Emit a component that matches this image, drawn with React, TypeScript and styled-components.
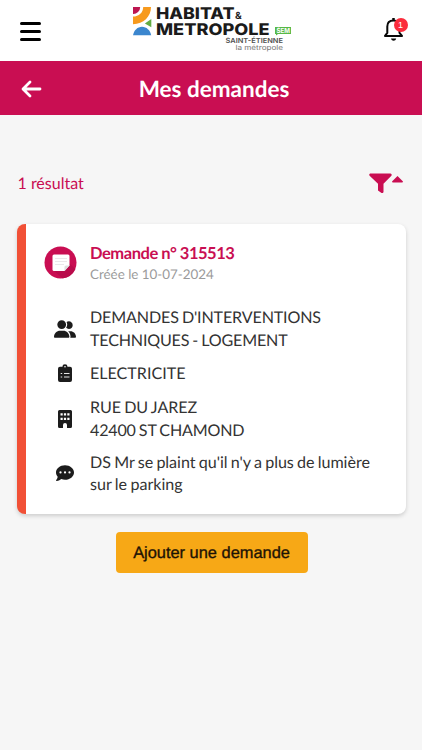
import React from "react";
import styled, { createGlobalStyle } from "styled-components";
import { FaCommentDots, FaUserGroup } from "react-icons/fa6";

const GlobalStyle = createGlobalStyle`
  * { box-sizing: border-box; }
  body {
    margin: 0;
    background: #f6f6f6;
    font-family: Lato, "Liberation Sans", sans-serif;
    color: #333;
    text-rendering: geometricPrecision;
  }
`;

const Page = styled.div`
  min-height: 750px;
  background: #f6f6f6;
`;

const TopBar = styled.header`
  height: 61px;
  display: grid;
  grid-template-columns: 132px 1fr 132px;
  background: #fff;
`;

const MenuButton = styled.button`
  width: 21px;
  height: 19px;
  margin: 21.5px 0 0 19.5px;
  padding: 0;
  border: 0;
  background: none;
  display: flex;
  flex-direction: column;
  justify-content: space-between;
`;

const MenuLine = styled.span`
  height: 3px;
  border-radius: 2px;
  background: #000;
`;

const BellButton = styled.button`
  position: relative;
  justify-self: end;
  width: 22px;
  height: 25px;
  margin: 17px 17px 0 0;
  padding: 0;
  border: 0;
  background: none;
  svg { display: block; }
`;

const Badge = styled.span`
  position: absolute;
  top: 0.5px;
  right: -2.5px;
  width: 14px;
  height: 14px;
  border-radius: 50%;
  background: #fb2c3c;
  color: #fff;
  font: 9px/14px "Liberation Sans", sans-serif;
  text-align: center;
`;

const TitleBar = styled.div`
  height: 54px;
  display: grid;
  grid-template-columns: 64px 1fr 58px;
  align-items: center;
  background: #c90e52;
  color: #fff;
`;

const BackButton = styled.button`
  margin: 2px 0 0 21px;
  padding: 0;
  border: 0;
  background: none;
  svg { display: block; }
`;

const Title = styled.h1`
  margin: 1px 0 0;
  font-size: 22.5px;
  line-height: 28px;
  font-weight: 700;
  text-align: center;
`;

const Content = styled.main`
  padding: 0 16px 0 17px;
`;

const ResultBar = styled.div`
  height: 109px;
  padding: 28px 3px 0 0.5px;
  display: flex;
  align-items: center;
  justify-content: space-between;
  color: #c90e52;
  font-size: 16px;
`;

const FilterButton = styled.button`
  margin: 0 0 1px;
  padding: 0;
  border: 0;
  background: none;
  svg { display: block; }
`;

const Card = styled.article`
  height: 290px;
  padding: 18px 20px 0 18px;
  border-left: 9px solid #f15036;
  border-radius: 8px;
  background: #fff;
  box-shadow: 0 2px 4px rgba(0, 0, 0, 0.17);
`;

const CardHeader = styled.div`
  display: grid;
  grid-template-columns: 46px 1fr;
  height: 64px;
`;

const CardTitle = styled.h2`
  margin: 0;
  color: #c90e52;
  font-size: 16.5px;
  line-height: 23px;
  font-weight: 700;
  letter-spacing: -0.45px;
  word-spacing: -0.2px;
`;

const CardDate = styled.div`
  color: #9a9a9a;
  font-size: 13.4px;
  line-height: 18px;
`;

const NoteIcon = styled.svg`
  margin-top: 4px;
`;

const Detail = styled.div<{ $gap?: number }>`
  display: grid;
  grid-template-columns: 46px 1fr;
  align-items: center;
  margin-bottom: ${({ $gap = 11 }) => $gap}px;
  font-size: 16.1px;
  line-height: 22.7px;
  word-spacing: -0.8px;
`;

const DetailIcon = styled.span`
  display: flex;
  justify-content: center;
  width: 41px;
  color: #1c1c1c;
`;

const DetailText = styled.div`
  padding-top: 1px;
  margin-bottom: -1px;
`;

const DetailLine = styled.div<{ $tracking: number }>`
  letter-spacing: ${({ $tracking }) => $tracking}px;
  white-space: nowrap;
`;

const AddButton = styled.button`
  display: block;
  width: 192px;
  height: 41px;
  margin: 18px auto 0;
  padding: 2px 0 0;
  border: 0;
  border-radius: 4px;
  background: #f7a816;
  color: #1d1305;
  font: 16.4px "Liberation Sans", Arial, sans-serif;
  -webkit-text-stroke: 0.35px #1d1305;
  text-rendering: geometricPrecision;
`;

const Logo = () => (
  <svg width="158" height="61" viewBox="132 0 158 61" overflow="visible" fontFamily="Inter, sans-serif">
    <path d="M133 7h7.2a7 7 0 0 1-7.2 7z" fill="#bd1650" />
    <path d="M143.2 7H151C151 16.5 143.5 24.2 133 24.2v-7.6C139 16.6 143.2 12.5 143.2 7z" fill="#f79a1d" />
    <path d="M151.3 19v8.2l-6.4-3.7z" fill="#62ac43" />
    <path d="M133 35.2c1-5 4.5-8.5 9-8.5s8.2 3.5 9.2 8.5z" fill="#3b86ce" />
    <g fill="#1b1b1b" fontWeight="800">
      <text x="156" y="18.9" fontSize="16" textLength="78.5" lengthAdjust="spacingAndGlyphs">HABITAT</text>
      <text x="235" y="19" fontSize="10" fontWeight="700">&amp;</text>
      <text x="156" y="35" fontSize="16" textLength="113.5" lengthAdjust="spacingAndGlyphs">METROPOLE</text>
    </g>
    <path d="M275 27h16v7h-13l-2 1.5v-1.5h-1z" fill="#57b947" />
    <text x="276.5" y="33.2" fontSize="7" fontWeight="700" fill="#fff" textLength="13.5" lengthAdjust="spacingAndGlyphs">SEM</text>
    <text x="225.5" y="43" fontSize="7" fontWeight="600" fill="#4e4e4e" textLength="57.5" lengthAdjust="spacingAndGlyphs">SAINT-ÉTIENNE</text>
    <text x="235.5" y="50" fontSize="7.2" fill="#777" textLength="47.5" lengthAdjust="spacingAndGlyphs">la métropole</text>
  </svg>
);

const ClipboardIcon = () => (
  <svg width="14" height="19" viewBox="0 0 14 19">
    <path d="M2 2.8h2.5a2.5 2.5 0 0 1 5 0H12q2 0 2 2V16q0 2-2 2H2q-2 0-2-2V4.8q0-2 2-2z" fill="currentColor" />
    <path d="M2.7 9.5h1.5M6 9.5h5.5M2.7 13h1.5M6 13h5.5" stroke="#fff" strokeWidth=".9" />
    <circle cx="7" cy="2.7" r=".8" fill="#fff" />
  </svg>
);

const BuildingIcon = () => (
  <svg width="14" height="18" viewBox="0 0 14 18">
    <path d="M1.5 0h11Q14 0 14 1.5v15q0 1.5-1.5 1.5H9v-3q0-2-2-2t-2 2v3H1.5Q0 18 0 16.5v-15Q0 0 1.5 0z" fill="currentColor" />
    <path d="M2.5 4.3h9M2.5 8.8h9" stroke="#fff" strokeWidth="2.2" strokeDasharray="2.2 1.2" />
  </svg>
);

const details = [
  {
    icon: <FaUserGroup size={22} />,
    lines: [
      { text: "DEMANDES D'INTERVENTIONS", tracking: -0.15 },
      { text: "TECHNIQUES - LOGEMENT", tracking: -0.19 },
    ],
  },
  { icon: <ClipboardIcon />, lines: [{ text: "ELECTRICITE", tracking: 0 }] },
  {
    icon: <BuildingIcon />,
    lines: [
      { text: "RUE DU JAREZ", tracking: -0.08 },
      { text: "42400 ST CHAMOND", tracking: -0.19 },
    ],
    gap: 9,
  },
  {
    icon: <FaCommentDots size={18} />,
    lines: [
      { text: "DS Mr se plaint qu'il n'y a plus de lumière", tracking: -0.04 },
      { text: "sur le parking", tracking: 0 },
    ],
  },
];

export default function App() {
  return (
    <Page>
      <GlobalStyle />
      <TopBar>
        <MenuButton aria-label="Menu">
          <MenuLine />
          <MenuLine />
          <MenuLine />
        </MenuButton>
        <Logo />
        <BellButton aria-label="Notifications">
          <svg width="22" height="25" viewBox="0 0 22 25" fill="none" stroke="#080808" strokeWidth="2">
            <path d="M2 18.9l2.3-3V9.5C4.3 5.5 7 3.5 10.5 3.5s6 2.5 6 6v6.4l2.5 3z" strokeLinejoin="round" />
            <path d="M10.5 1v3" strokeWidth="2.5" />
            <path d="M8 21.5h5.2c-.7 3-4.5 3-5.2 0z" fill="#080808" stroke="none" />
          </svg>
          <Badge>1</Badge>
        </BellButton>
      </TopBar>
      <TitleBar>
        <BackButton aria-label="Retour">
          <svg width="21" height="18" viewBox="0 0 21 18" fill="none" stroke="#fff" strokeWidth="2.8" strokeLinecap="round" strokeLinejoin="round">
            <path d="M9 2L2 9l7 7M2.5 9h16.5" />
          </svg>
        </BackButton>
        <Title>Mes demandes</Title>
      </TitleBar>
      <Content>
        <ResultBar>
          <span>1 résultat</span>
          <FilterButton aria-label="Filtrer">
            <svg width="34" height="20" viewBox="0 0 34 20" fill="#c90e52">
              <path d="M1.2 0.5h20.3q1.8.7.9 2.2L14.5 10.8v8.2q-.6 1.5-2 .9L9 17.5V10.8L.6 2.7Q-.4 1.2 1.2.5z" />
              <path d="M28.5 3L34 8.5q0 1-1 1h-9q-1 0-1-1z" />
            </svg>
          </FilterButton>
        </ResultBar>
        <Card>
          <CardHeader>
            <NoteIcon width="33" height="33" viewBox="0 0 33 33">
              <circle cx="16.5" cy="16.5" r="16" fill="#c90e52" />
              <path d="M25 17L31.5 23a16 16 0 0 1-13 9.3L10 25z" fill="#b90b4b" />
              <path d="M10 8.5h14q1.5 0 1.5 1.5v9.5L20.5 25H10Q8.5 25 8.5 23.5V10q0-1.5 1.5-1.5z" fill="#fff" />
              <path d="M25.5 19.5H22q-1.5 0-1.5 1.5v4z" fill="#ddd" />
              <path d="M11 12.5h12M11 15.5h12M11 18.5h9" stroke="#e5e1e3" strokeWidth=".8" />
            </NoteIcon>
            <div>
              <CardTitle>Demande n° 315513</CardTitle>
              <CardDate>Créée le 10-07-2024</CardDate>
            </div>
          </CardHeader>
          {details.map(({ icon, lines, gap }) => (
            <Detail key={lines[0].text} $gap={gap}>
              <DetailIcon>{icon}</DetailIcon>
              <DetailText>
                {lines.map(({ text, tracking }) => (
                  <DetailLine key={text} $tracking={tracking}>{text}</DetailLine>
                ))}
              </DetailText>
            </Detail>
          ))}
        </Card>
        <AddButton>Ajouter une demande</AddButton>
      </Content>
    </Page>
  );
}
